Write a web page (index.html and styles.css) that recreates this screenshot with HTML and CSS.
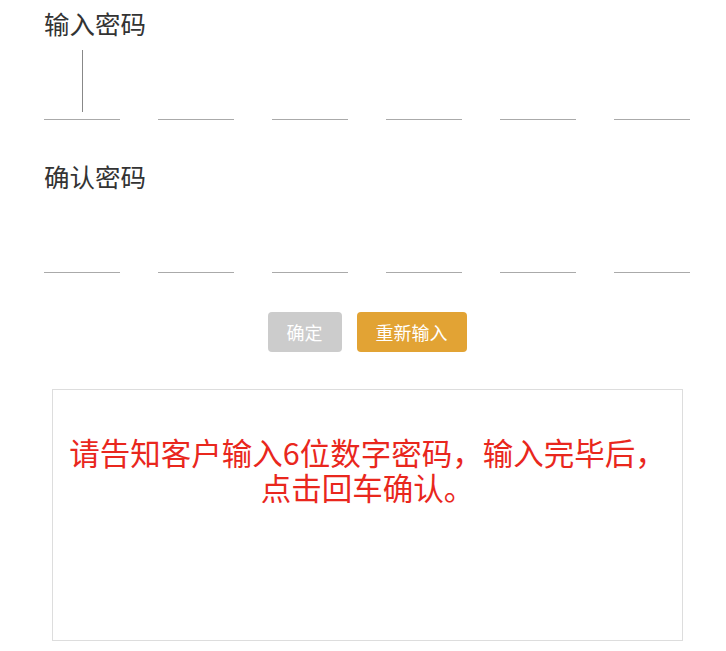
FILE: index.html
```html
<!DOCTYPE html>
<html lang="zh-CN">
<head>
<meta charset="utf-8">
<title>输入密码</title>
<link rel="stylesheet" href="styles.css">
</head>
<body>
<div class="page">
  <div class="field">
    <div class="label">输入密码</div>
    <div class="pins">
      <div class="pin active"><span class="cursor"></span></div>
      <div class="pin"></div>
      <div class="pin"></div>
      <div class="pin"></div>
      <div class="pin"></div>
      <div class="pin"></div>
    </div>
  </div>
  <div class="field second">
    <div class="label">确认密码</div>
    <div class="pins">
      <div class="pin"></div>
      <div class="pin"></div>
      <div class="pin"></div>
      <div class="pin"></div>
      <div class="pin"></div>
      <div class="pin"></div>
    </div>
  </div>
  <div class="actions">
    <button class="btn btn-ok" type="button">确定</button>
    <button class="btn btn-reset" type="button">重新输入</button>
  </div>
  <div class="notice">
    <p class="notice-line">请告知客户输入6位数字密码，输入完毕后，</p>
    <p class="notice-line">点击回车确认。</p>
  </div>
</div>
</body>
</html>
```

FILE: styles.css
```css
html, body {
  margin: 0;
  padding: 0;
  background: #ffffff;
}
body {
  font-family: "Noto Sans CJK SC", "Noto Sans", sans-serif;
  color: #333333;
}
.page {
  width: 646px;
  padding: 5px 0 0 44px;
}
.label {
  font-size: 25.5px;
  line-height: 35px;
  height: 35px;
  color: #333333;
}
.pins {
  display: flex;
  gap: 38px;
  margin-top: 9px;
}
.pin {
  width: 76px;
  height: 70px;
  border-bottom: 1px solid #aaaaaa;
  display: flex;
  justify-content: center;
  align-items: flex-start;
}
.cursor {
  display: block;
  width: 1px;
  height: 62px;
  margin-top: 1px;
  background: #888888;
}
.field.second {
  margin-top: 38px;
}
.actions {
  display: flex;
  justify-content: center;
  gap: 15px;
  margin-top: 39px;
}
.btn {
  height: 40px;
  padding: 0 19px;
  border: none;
  border-radius: 4px;
  font-family: "Noto Sans CJK SC", sans-serif;
  font-size: 18px;
  line-height: 40px;
  color: #ffffff;
  cursor: pointer;
}
.btn-ok {
  background: #cccccc;
}
.btn-reset {
  background: #e2a334;
}
.notice {
  box-sizing: border-box;
  width: 631px;
  height: 252px;
  margin: 37px 0 0 8px;
  border: 1px solid #dddddd;
  padding-top: 45px;
}
.notice-line {
  margin: 0;
  height: 35px;
  text-align: center;
  font-size: 30.5px;
  line-height: 35px;
  color: #e9271d;
  white-space: nowrap;
}
```
